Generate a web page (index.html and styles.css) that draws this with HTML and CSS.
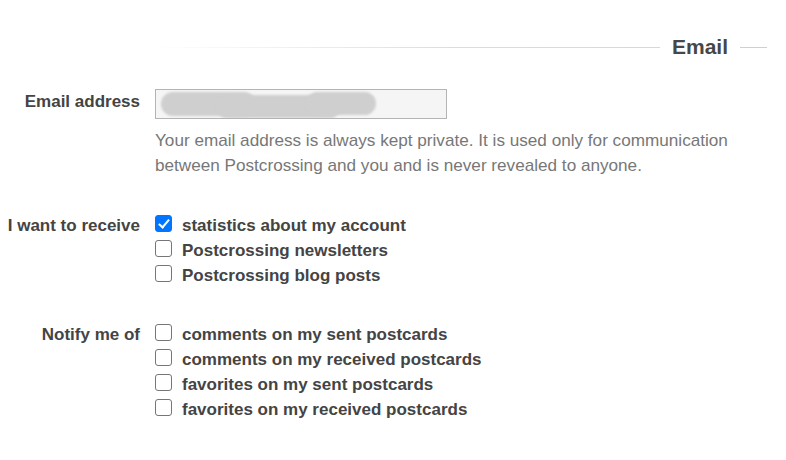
FILE: index.html
```html
<!DOCTYPE html>
<html>
<head>
<meta charset="utf-8">
<link rel="stylesheet" href="styles.css">
</head>
<body>
<div class="page">
  <div class="legend">
    <span class="line-left"></span>
    <h2 class="legend-title">Email</h2>
    <span class="line-right"></span>
  </div>

  <div class="row row-email">
    <label class="label">Email address</label>
    <div class="field">
      <div class="input"><span class="blob blob-a"></span><span class="blob blob-b"></span><span class="blob blob-c"></span></div>
      <p class="help">Your email address is always kept private. It is used only for communication between Postcrossing and you and is never revealed to anyone.</p>
    </div>
  </div>

  <div class="row row-receive">
    <div class="label">I want to receive</div>
    <div class="field checks">
      <label class="check"><input type="checkbox" checked><span>statistics about my account</span></label>
      <label class="check"><input type="checkbox"><span>Postcrossing newsletters</span></label>
      <label class="check"><input type="checkbox"><span>Postcrossing blog posts</span></label>
    </div>
  </div>

  <div class="row row-notify">
    <div class="label">Notify me of</div>
    <div class="field checks">
      <label class="check"><input type="checkbox"><span>comments on my sent postcards</span></label>
      <label class="check"><input type="checkbox"><span>comments on my received postcards</span></label>
      <label class="check"><input type="checkbox"><span>favorites on my sent postcards</span></label>
      <label class="check"><input type="checkbox"><span>favorites on my received postcards</span></label>
    </div>
  </div>
</div>
</body>
</html>
```
FILE: styles.css
```css
* { box-sizing: border-box; }
html, body { margin: 0; padding: 0; background: #fff; }
body {
  font-family: "Liberation Sans", Arial, sans-serif;
  font-size: 17px;
  color: #444;
  width: 786px;
  height: 460px;
  overflow: hidden;
}
.page { padding: 33px 19px 0 0; }

.legend {
  display: flex;
  align-items: center;
  padding-left: 155px;
  height: 28px;
}
.line-left {
  flex: 1;
  height: 1px;
  background: linear-gradient(to right, rgba(221,221,221,0), #dcdcdc 60%, #d8d8d8);
}
.legend-title {
  margin: 0 12px;
  font-size: 21px;
  font-weight: bold;
  color: #474747;
  line-height: 28px;
}
.line-right {
  width: 27px;
  height: 1px;
  background: #cfcfcf;
}

.row {
  display: grid;
  grid-template-columns: 140px 1fr;
  column-gap: 15px;
}
.label {
  text-align: right;
  font-weight: bold;
  color: #444;
  line-height: 25px;
}
.row-email { margin-top: 28px; }

.input {
  position: relative;
  width: 292px;
  height: 30px;
  background: #f5f5f5;
  border: 1px solid #b4b4b4;
  overflow: hidden;
}
.blob {
  position: absolute;
  background: #cfcfcf;
  border-radius: 12px;
  filter: blur(1px);
}
.blob-a { left: 5px; top: 2px; width: 95px; height: 24px; border-radius: 12px; }
.blob-b { left: 60px; top: 5px; width: 125px; height: 23px; }
.blob-c { left: 150px; top: 2px; width: 70px; height: 23px; border-radius: 12px; }

.help {
  margin: 9px 0 0;
  color: #777;
  font-size: 17.15px;
  line-height: 25px;
  max-width: 600px;
}

.row-receive { margin-top: 35px; }
.row-notify { margin-top: 34px; }

.checks { display: flex; flex-direction: column; }
.check {
  display: flex;
  align-items: center;
  height: 25px;
  font-weight: bold;
  color: #444;
}
.check input {
  appearance: none;
  -webkit-appearance: none;
  margin: 0 10px 0 0;
  width: 17px;
  height: 17px;
  border: 1px solid #767676;
  border-radius: 3px;
  background: #fff;
  position: relative;
  top: -2px;
}
.check input:checked {
  background: #0075ff;
  border-color: #0075ff;
}
.check input:checked::after {
  content: "";
  position: absolute;
  left: 5px;
  top: 1px;
  width: 4px;
  height: 9px;
  border: solid #fff;
  border-width: 0 2.5px 2.5px 0;
  transform: rotate(40deg);
}
```
